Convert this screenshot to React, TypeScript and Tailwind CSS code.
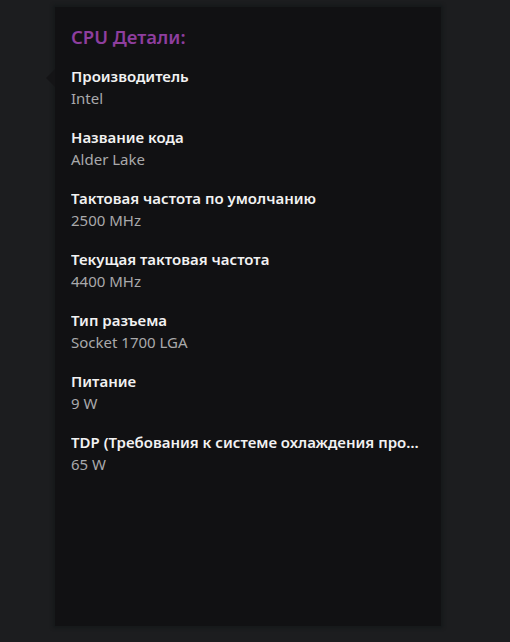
import React from 'react'

const specs = [
  { label: 'Производитель', value: 'Intel' },
  { label: 'Название кода', value: 'Alder Lake' },
  { label: 'Тактовая частота по умолчанию', value: '2500 MHz' },
  { label: 'Текущая тактовая частота', value: '4400 MHz' },
  { label: 'Тип разъема', value: 'Socket 1700 LGA' },
  { label: 'Питание', value: '9 W' },
  { label: 'TDP (Требования к системе охлаждения процессора)', value: '65 W' },
]

const App = () => {
  return (
    <div className="min-h-[642px] bg-[#1c1d1f] pt-[7px] pl-[55px] pr-[69px] pb-[16px] font-['Noto_Sans',sans-serif]">
      <div className="relative h-[619px] bg-[#111113] pl-4 pr-5 pt-[17px] shadow-[0_0_3px_2px_rgba(20,24,26,0.9)]">
        {/* Pointer arrow */}
        <div className="absolute left-[-9px] top-[62px] h-0 w-0 border-y-[9px] border-r-[9px] border-y-transparent border-r-[#141416]" />

        <h2 className="text-[18.5px] font-semibold leading-[26px] text-[#8e3e9e]">CPU Детали:</h2>

        <div className="mt-[15px] flex flex-col gap-[17px]">
          {specs.map((s) => (
            <div key={s.label} className="min-w-0">
              <div className="truncate text-[15px] font-semibold leading-[22px] text-[#f2f2f2]">{s.label}</div>
              <div className="text-[15px] leading-[22px] text-[#a9a9ab]">{s.value}</div>
            </div>
          ))}
        </div>
      </div>
    </div>
  )
}

export default App
